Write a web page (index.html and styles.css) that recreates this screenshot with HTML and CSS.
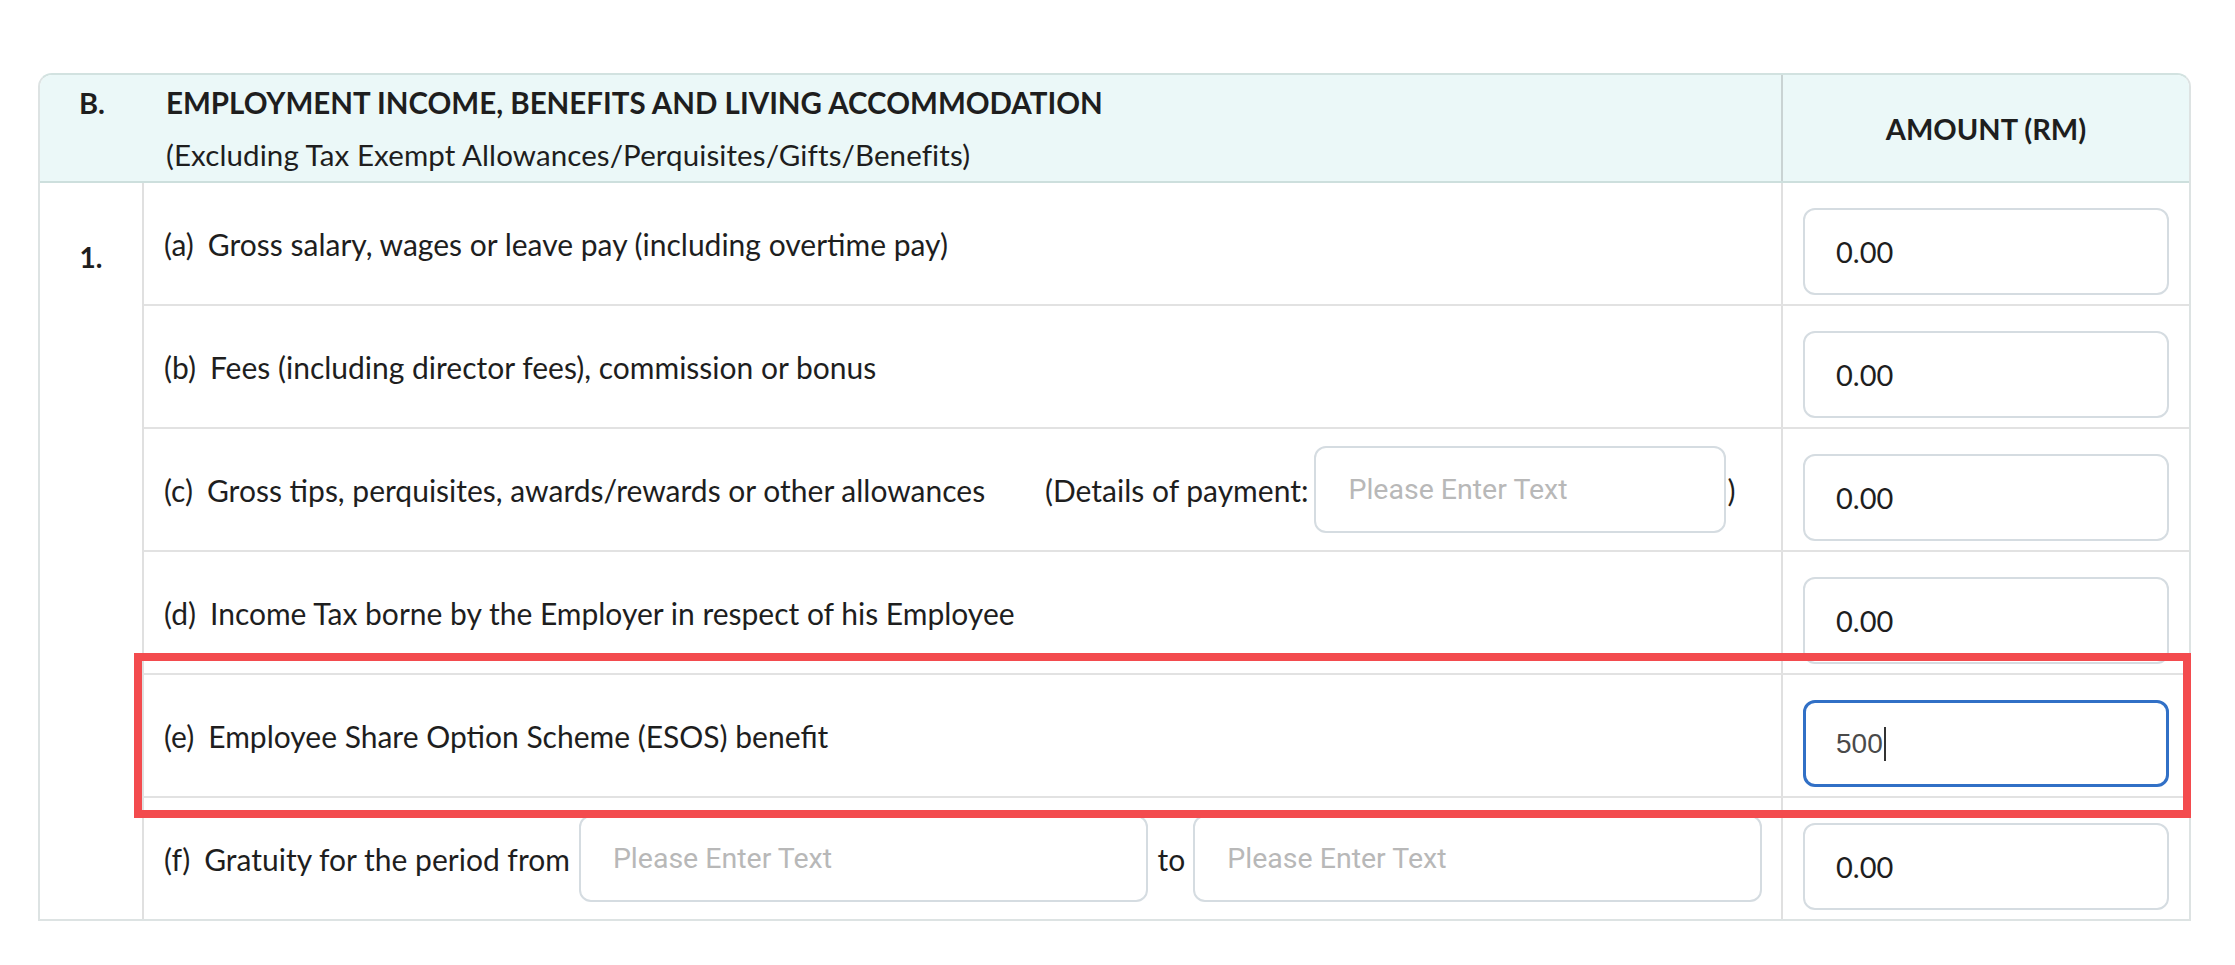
FILE: index.html
```html
<!DOCTYPE html>
<html lang="en">
<head>
<meta charset="utf-8">
<title>Employment Income</title>
<link rel="stylesheet" href="styles.css">
</head>
<body>
<div class="page">
  <div class="frame">
    <div class="tbl">
      <div class="head">
        <div class="hno">B.</div>
        <div class="htitle">
          <div class="ht1">EMPLOYMENT INCOME, BENEFITS AND LIVING ACCOMMODATION</div>
          <div class="ht2">(Excluding Tax Exempt Allowances/Perquisites/Gifts/Benefits)</div>
        </div>
        <div class="hamt">AMOUNT (RM)</div>
      </div>
      <div class="body">
        <div class="num">1.</div>
        <div class="rows">
          <div class="row">
            <div class="lbl"><span class="k">(a)</span>Gross salary, wages or leave pay (including overtime pay)</div>
            <div class="amt"><input class="field amount" type="text" value="0.00"></div>
          </div>
          <div class="row">
            <div class="lbl"><span class="k">(b)</span>Fees (including director fees), commission or bonus</div>
            <div class="amt"><input class="field amount" type="text" value="0.00"></div>
          </div>
          <div class="row">
            <div class="lbl">
              <span class="lbl-main"><span class="k">(c)</span>Gross tips, perquisites, awards/rewards or other allowances</span>
              <span class="detail">(Details of payment:</span>
              <input class="field text detail-input" type="text" placeholder="Please Enter Text">
              <span class="close">)</span>
            </div>
            <div class="amt"><input class="field amount" type="text" value="0.00"></div>
          </div>
          <div class="row">
            <div class="lbl"><span class="k">(d)</span>Income Tax borne by the Employer in respect of his Employee</div>
            <div class="amt"><input class="field amount" type="text" value="0.00"></div>
          </div>
          <div class="row">
            <div class="lbl"><span class="k">(e)</span>Employee Share Option Scheme (ESOS) benefit</div>
            <div class="amt"><div class="field amount focused"><span class="typed">500</span><span class="caret"></span></div></div>
          </div>
          <div class="row last">
            <div class="lbl">
              <span class="lbl-f"><span class="k">(f)</span>Gratuity for the period from</span>
              <input class="field text period" type="text" placeholder="Please Enter Text">
              <span class="to">to</span>
              <input class="field text period" type="text" placeholder="Please Enter Text">
            </div>
            <div class="amt"><input class="field amount" type="text" value="0.00"></div>
          </div>
        </div>
      </div>
    </div>
    <div class="highlight"></div>
  </div>
</div>
</body>
</html>
```
FILE: styles.css
```css
* { box-sizing: border-box; }

body {
  margin: 0;
  background: #ffffff;
  font-family: Lato, "Noto Sans", sans-serif;
  color: #1e1e1e;
}

.page {
  padding: 73px 0 0 38px;
}

.frame {
  position: relative;
  width: 2153px;
}

.tbl {
  border: 2px solid #dde3e3;
  border-top-color: #d2e2e0;
  border-radius: 14px 14px 0 0;
  overflow: hidden;
}

/* header */
.head {
  display: grid;
  grid-template-columns: 104px 1fr 408px;
  height: 108px;
  background: #ebf8f8;
  border-bottom: 2px solid #cddfdd;
}

.hno {
  font-weight: 700;
  font-size: 29px;
  line-height: 52px;
  padding-top: 2px;
  text-align: center;
}

.htitle {
  padding: 2px 0 0 22px;
  font-size: 29.5px;
  line-height: 52px;
}

.ht1 { font-weight: 700; }

.ht2 { letter-spacing: 0.1px; }

.hamt {
  border-left: 2px solid #c9d3d3;
  display: flex;
  align-items: center;
  justify-content: center;
  font-weight: 700;
  font-size: 29px;
}

/* body */
.body {
  display: grid;
  grid-template-columns: 104px 1fr;
}

.num {
  border-right: 2px solid #e0e0e0;
  text-align: center;
  font-weight: 700;
  font-size: 28px;
  line-height: 34px;
  padding-top: 57px;
}

.row {
  display: grid;
  grid-template-columns: 1fr 408px;
  height: 123px;
  border-bottom: 2px solid #e2e2e2;
}

.row.last {
  height: 121px;
  border-bottom: none;
}

.lbl {
  display: flex;
  align-items: center;
  padding: 0 19px 0 20px;
  font-size: 30px;
  white-space: nowrap;
}

.k { margin-right: 14px; }

.lbl-main { width: 881px; flex: none; }

.detail { flex: none; }

.close { margin-left: 1px; }

.amt {
  border-left: 2px solid #e0e0e0;
  padding: 25px 20px 0 20px;
}

/* fields */
.field {
  display: block;
  height: 87px;
  border: 2px solid #d5dce1;
  border-radius: 12px;
  background: #fff;
  outline: none;
  margin: 0;
}

.amount {
  width: 100%;
  padding: 0 0 0 31px;
  font-family: Lato, "Noto Sans", sans-serif;
  font-size: 29px;
  color: #1e1e1e;
}

.text {
  padding: 0 0 0 32px;
  font-family: Roboto, "Liberation Sans", sans-serif;
  font-size: 28.5px;
  color: #333;
}

.text::placeholder { color: #b8b8b8; }

.detail-input {
  width: 412px;
  flex: none;
  margin-left: 6px;
}

.lbl-f { flex: none; margin-right: 9px; }

.period { flex: 1; min-width: 0; }

.to { margin: 0 8px 0 10px; }

.focused {
  display: flex;
  align-items: center;
  border: 3px solid #3170c6;
  padding-left: 30px;
}

.typed {
  font-family: "Liberation Sans", Arial, sans-serif;
  font-size: 28px;
  color: #4a4a4a;
}

.caret {
  width: 2px;
  height: 34px;
  background: #333;
  margin-left: 1px;
}

/* annotation overlay */
.highlight {
  position: absolute;
  left: 96px;
  top: 580px;
  width: 2057px;
  height: 165px;
  border: 8px solid #f34b4e;
  pointer-events: none;
}
```
